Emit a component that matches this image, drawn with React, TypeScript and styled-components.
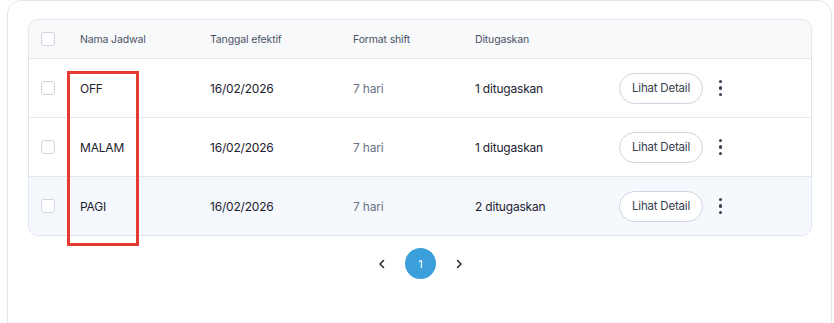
import React from 'react';
import styled, { createGlobalStyle } from 'styled-components';

const GlobalStyle = createGlobalStyle`
  html, body {
    margin: 0;
    padding: 0;
    background: #ffffff;
    font-family: "Inter", "Noto Sans", sans-serif;
  }
`;

const Page = styled.div`
  position: relative;
  width: 834px;
  height: 323px;
  overflow: hidden;
  padding: 0 2px 0 7px;
  box-sizing: border-box;
`;

const Card = styled.div`
  border: 1px solid #e4e7ee;
  border-radius: 14px;
  padding: 18px 19px 40px 21px;
  height: 360px;
  box-sizing: border-box;
`;

const Table = styled.div`
  border: 1px solid #e1e6ee;
  border-radius: 10px;
  overflow: hidden;
  margin-left: -1px;
`;

const Row = styled.div<{ head?: boolean; shaded?: boolean }>`
  display: grid;
  grid-template-columns: 51px 130px 143px 122px 144px 1fr;
  align-items: center;
  height: ${p => (p.head ? '38px' : '58px')};
  background: ${p => (p.head ? '#f8f9fb' : p.shaded ? '#f5f8fc' : '#ffffff')};
  border-top: ${p => (p.head ? 'none' : '1px solid #e3e8ef')};
`;

const CheckCell = styled.div`
  padding-left: 12px;
  display: flex;
  align-items: center;
`;

const Checkbox = styled.span`
  display: block;
  width: 12px;
  height: 12px;
  border: 1px solid #cfd5df;
  border-radius: 3px;
  background: #ffffff;
`;

const HeadText = styled.div`
  font-size: 10.5px;
  color: #4b5263;
  letter-spacing: -0.15px;
`;

const Cell = styled.div<{ muted?: boolean }>`
  font-size: 12px;
  color: ${p => (p.muted ? '#6b7385' : '#1c2130')};
  letter-spacing: -0.2px;
`;

const Actions = styled.div`
  display: flex;
  align-items: center;
  gap: 10px;
`;

const DetailButton = styled.button`
  height: 31px;
  width: 84px;
  border: 1px solid #cdd5e2;
  border-radius: 16px;
  background: #ffffff;
  font-family: inherit;
  font-size: 11.5px;
  color: #373e4d;
  letter-spacing: -0.2px;
  padding: 0;
`;

const Kebab = styled.div`
  display: flex;
  flex-direction: column;
  gap: 3px;
  padding: 0 6px;
  span {
    width: 3.4px;
    height: 3.4px;
    border-radius: 50%;
    background: #3b4252;
  }
`;

const Pager = styled.div`
  display: flex;
  justify-content: center;
  align-items: center;
  gap: 16px;
  margin-top: 12px;
`;

const Chevron = styled.span`
  display: flex;
  color: #2a2f3a;
  width: 14px;
  justify-content: center;
`;

const PageDot = styled.span`
  width: 31px;
  height: 31px;
  border-radius: 50%;
  background: #3b9fdb;
  color: #ffffff;
  font-size: 11px;
  display: flex;
  align-items: center;
  justify-content: center;
`;

const Highlight = styled.div`
  position: absolute;
  left: 67px;
  top: 71px;
  width: 66px;
  height: 169px;
  border: 3px solid #e63b33;
`;

const rows = [
  { name: 'OFF', date: '16/02/2026', format: '7 hari', assigned: '1 ditugaskan' },
  { name: 'MALAM', date: '16/02/2026', format: '7 hari', assigned: '1 ditugaskan' },
  { name: 'PAGI', date: '16/02/2026', format: '7 hari', assigned: '2 ditugaskan' },
];

const ChevronIcon = ({ dir }: { dir: 'left' | 'right' }) => (
  <svg width="8" height="10" viewBox="0 0 8 10" fill="none">
    <path
      d={dir === 'left' ? 'M5.5 1.5 2 5l3.5 3.5' : 'M2.5 1.5 6 5 2.5 8.5'}
      stroke="currentColor"
      strokeWidth="1.6"
      strokeLinecap="round"
      strokeLinejoin="round"
    />
  </svg>
);

export default function App() {
  return (
    <Page>
      <GlobalStyle />
      <Card>
        <Table>
          <Row head>
            <CheckCell><Checkbox /></CheckCell>
            <HeadText>Nama Jadwal</HeadText>
            <HeadText>Tanggal efektif</HeadText>
            <HeadText>Format shift</HeadText>
            <HeadText>Ditugaskan</HeadText>
            <div />
          </Row>
          {rows.map((r, i) => (
            <Row key={r.name} shaded={i === 2}>
              <CheckCell><Checkbox /></CheckCell>
              <Cell>{r.name}</Cell>
              <Cell>{r.date}</Cell>
              <Cell muted>{r.format}</Cell>
              <Cell>{r.assigned}</Cell>
              <Actions>
                <DetailButton>Lihat Detail</DetailButton>
                <Kebab><span /><span /><span /></Kebab>
              </Actions>
            </Row>
          ))}
        </Table>
        <Pager>
          <Chevron><ChevronIcon dir="left" /></Chevron>
          <PageDot>1</PageDot>
          <Chevron><ChevronIcon dir="right" /></Chevron>
        </Pager>
      </Card>
      <Highlight />
    </Page>
  );
}
